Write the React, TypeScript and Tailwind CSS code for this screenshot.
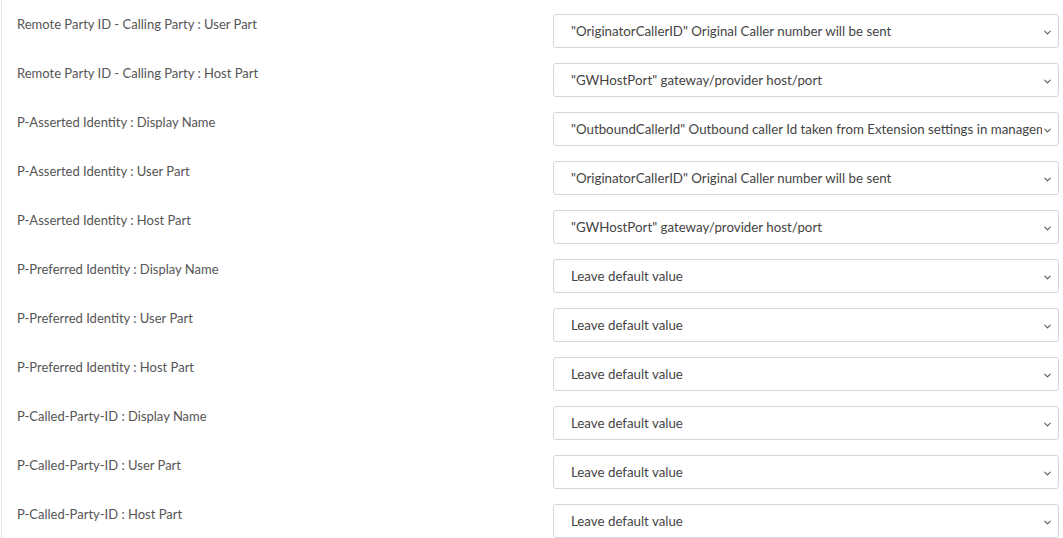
import { ChevronDown } from "lucide-react";

const rows = [
  ["Remote Party ID - Calling Party : User Part", "\"OriginatorCallerID\" Original Caller number will be sent"],
  ["Remote Party ID - Calling Party : Host Part", "\"GWHostPort\" gateway/provider host/port"],
  ["P-Asserted Identity : Display Name", "\"OutboundCallerId\" Outbound caller Id taken from Extension settings in management console"],
  ["P-Asserted Identity : User Part", "\"OriginatorCallerID\" Original Caller number will be sent"],
  ["P-Asserted Identity : Host Part", "\"GWHostPort\" gateway/provider host/port"],
  ["P-Preferred Identity : Display Name", "Leave default value"],
  ["P-Preferred Identity : User Part", "Leave default value"],
  ["P-Preferred Identity : Host Part", "Leave default value"],
  ["P-Called-Party-ID : Display Name", "Leave default value"],
  ["P-Called-Party-ID : User Part", "Leave default value"],
  ["P-Called-Party-ID : Host Part", "Leave default value"],
];

export default function App() {
  return (
    <div className="h-[538px] overflow-hidden bg-white font-['Lato',sans-serif]">
      <div className="ml-px h-full border-l border-[#e5e5e5] pt-[14px] flex flex-col gap-[15px]">
        {rows.map(([label, value]) => (
          <div key={label} className="flex">
            <div className="w-[551px] shrink-0 pl-[15px] pt-[1px] text-[13px] leading-[18px] text-[#555]">
              {label}
            </div>
            <div className="relative w-[506px] h-[34px] shrink-0 rounded-[3px] border border-[#d2d6de] bg-white">
              <div className="h-full w-[490px] pl-[17px] pt-[2px] flex items-center text-[13.3px] text-[#444] whitespace-nowrap overflow-hidden">
                {value}
              </div>
              <ChevronDown className="absolute right-[5px] top-[12px] w-[11px] h-[11px] text-[#555] bg-white" strokeWidth={2.2} />
            </div>
          </div>
        ))}
      </div>
    </div>
  );
}
